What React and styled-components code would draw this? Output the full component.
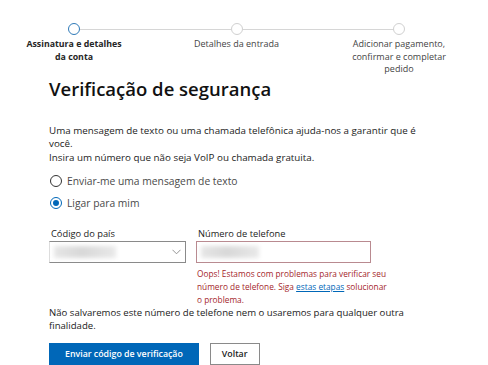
import React from 'react'
import styled, { createGlobalStyle } from 'styled-components'

const GlobalStyle = createGlobalStyle`
  * { box-sizing: border-box; }
  body {
    margin: 0;
    background: #fff;
    font-family: 'Open Sans', 'Noto Sans', sans-serif;
    color: #1b1b1b;
  }
`

const steps = [
  { label: 'Assinatura e detalhes da conta', active: true },
  { label: 'Detalhes da entrada' },
  { label: 'Adicionar pagamento, confirmar e completar pedido' },
]

const App = () => {
  return (
    <Page>
      <GlobalStyle />
      <Stepper>
        {steps.map((s, i) => (
          <Step key={i} $last={i === steps.length - 1}>
            <Dot $active={s.active} />
            <StepLabel $active={s.active}>{s.label}</StepLabel>
          </Step>
        ))}
      </Stepper>

      <Content>
        <Title>Verificação de segurança</Title>
        <Intro>
          Uma mensagem de texto ou uma chamada telefônica ajuda-nos a garantir que é você.
          <br />
          Insira um número que não seja VoIP ou chamada gratuita.
        </Intro>

        <Radios>
          <RadioRow>
            <Radio />
            Enviar-me uma mensagem de texto
          </RadioRow>
          <RadioRow>
            <Radio $checked />
            Ligar para mim
          </RadioRow>
        </Radios>

        <Fields>
          <Field>
            <FieldLabel>Código do país</FieldLabel>
            <SelectBox>
              <Blur $w={62} />
              <svg width='9' height='6' viewBox='0 0 9 6'>
                <path d='M0.5 0.8 L4.5 4.8 L8.5 0.8' fill='none' stroke='#888' strokeWidth='0.9' />
              </svg>
            </SelectBox>
          </Field>
          <Field>
            <FieldLabel>Número de telefone</FieldLabel>
            <InputBox $error>
              <Blur $w={58} />
            </InputBox>
            <ErrorText>
              Oops! Estamos com problemas para verificar seu
              <br />
              número de telefone. Siga <a href='#'>estas etapas</a> solucionar
              <br />o problema.
            </ErrorText>
          </Field>
        </Fields>

        <Note>
          Não salvaremos este número de telefone nem o usaremos para qualquer outra finalidade.
        </Note>

        <Actions>
          <Button $primary>Enviar código de verificação</Button>
          <Button>Voltar</Button>
        </Actions>
      </Content>
    </Page>
  )
}

const Page = styled.div`
  width: 488px;
  height: 365px;
  overflow: hidden;
`

const Stepper = styled.div`
  display: grid;
  grid-template-columns: repeat(3, 148px);
  column-gap: 14.5px;
  padding-top: 23px;
`

const Step = styled.div`
  position: relative;
  display: flex;
  flex-direction: column;
  align-items: center;
  &::after {
    content: '';
    display: ${(p) => (p.$last ? 'none' : 'block')};
    position: absolute;
    top: 6px;
    left: calc(50% + 6px);
    width: 151px;
    height: 1px;
    background: #d6d6d6;
  }
`

const Dot = styled.span`
  width: 12px;
  height: 12px;
  border-radius: 50%;
  border: 1.5px solid ${(p) => (p.$active ? '#2f7ab8' : '#d0d0d0')};
  background: #fff;
  position: relative;
  z-index: 1;
`

const StepLabel = styled.div`
  margin-top: 3px;
  max-width: 100px;
  text-align: center;
  font-size: ${(p) => (p.$active ? '8.8px' : '9px')};
  line-height: 12.5px;
  font-weight: ${(p) => (p.$active ? 700 : 400)};
  color: ${(p) => (p.$active ? '#262626' : '#444')};
`

const Content = styled.div`
  padding-left: 49px;
  padding-right: 40px;
`

const Title = styled.h1`
  margin: 0;
  font-size: 18.5px;
  line-height: 26px;
  font-weight: 600;
  color: #111;
`

const Intro = styled.p`
  margin: 22px 0 0;
  max-width: 372px;
  font-size: 9.8px;
  line-height: 13.5px;
  color: #1b1b1b;
`

const Radios = styled.div`
  margin-top: 10px;
  display: flex;
  flex-direction: column;
  gap: 8px;
`

const RadioRow = styled.label`
  display: flex;
  align-items: center;
  gap: 5px;
  height: 14px;
  font-size: 10.3px;
  color: #4a4a4a;
`

const Radio = styled.span`
  flex: none;
  width: 12px;
  height: 12px;
  margin-left: 1px;
  border-radius: 50%;
  border: 1px solid ${(p) => (p.$checked ? '#0067b8' : '#333')};
  display: flex;
  align-items: center;
  justify-content: center;
  &::after {
    content: '';
    display: ${(p) => (p.$checked ? 'block' : 'none')};
    width: 6px;
    height: 6px;
    border-radius: 50%;
    background: #0067b8;
  }
`

const Fields = styled.div`
  margin-top: 17px;
  display: grid;
  grid-template-columns: 137px 175px;
  column-gap: 10px;
  align-items: start;
`

const Field = styled.div`
  display: flex;
  flex-direction: column;
`

const FieldLabel = styled.div`
  font-size: 9.3px;
  line-height: 14px;
  color: #1b1b1b;
  padding-left: 2px;
`

const SelectBox = styled.div`
  height: 22px;
  border: 1px solid #8a8a8a;
  border-left-color: #ddd;
  display: flex;
  align-items: center;
  justify-content: space-between;
  padding-right: 4px;
  svg {
    flex: none;
  }
`

const InputBox = styled.div`
  height: 22px;
  border: 1px solid ${(p) => (p.$error ? '#b98a90' : '#8a8a8a')};
  display: flex;
  align-items: center;
`

const Blur = styled.span`
  width: ${(p) => p.$w}px;
  height: 12px;
  margin-left: 4px;
  background: linear-gradient(90deg, #e6e6e6, #d8d8d8 45%, #e9e9e9);
  filter: blur(2px);
`

const ErrorText = styled.div`
  margin-top: 4px;
  font-size: 8.3px;
  line-height: 13px;
  color: #a4262c;
  white-space: nowrap;
  padding-left: 1px;
  a {
    color: #0067b8;
  }
`

const Note = styled.p`
  margin: 0;
  font-size: 9.6px;
  line-height: 13px;
  color: #1b1b1b;
`

const Actions = styled.div`
  margin-top: 11px;
  display: flex;
  gap: 11px;
`

const Button = styled.button`
  height: 22px;
  padding: 0 ${(p) => (p.$primary ? '15px' : '11px')};
  font-family: inherit;
  font-size: 8.8px;
  font-weight: 600;
  border: 1px solid ${(p) => (p.$primary ? '#0067b8' : '#8a8a8a')};
  background: ${(p) => (p.$primary ? '#0067b8' : '#fff')};
  color: ${(p) => (p.$primary ? '#fff' : '#1b1b1b')};
`

export default App
